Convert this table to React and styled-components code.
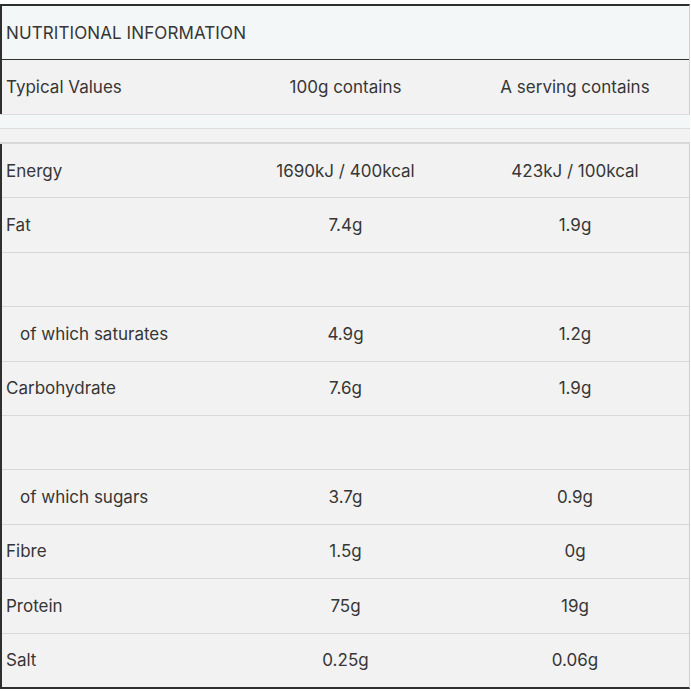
import styled, { createGlobalStyle } from 'styled-components';

const GlobalStyle = createGlobalStyle`
	html, body {
		margin: 0;
		padding: 0;
		background: #ffffff;
	}
	body {
		font-family: Inter, 'Noto Sans', 'Liberation Sans', sans-serif;
		color: #363636;
	}
`;

const ROWS = [
	{ name: 'Energy', per100: '1690kJ / 400kcal', serving: '423kJ / 100kcal' },
	{ name: 'Fat', per100: '7.4g', serving: '1.9g' },
	{ name: '', per100: '', serving: '' },
	{ name: 'of which saturates', per100: '4.9g', serving: '1.2g', sub: true },
	{ name: 'Carbohydrate', per100: '7.6g', serving: '1.9g' },
	{ name: '', per100: '', serving: '' },
	{ name: 'of which sugars', per100: '3.7g', serving: '0.9g', sub: true },
	{ name: 'Fibre', per100: '1.5g', serving: '0g' },
	{ name: 'Protein', per100: '75g', serving: '19g' },
	{ name: 'Salt', per100: '0.25g', serving: '0.06g' },
];

const Page = styled.div`
	width: 690px;
	padding-top: 4px;
`;

const HeadTable = styled.div`
	border-top: 2px solid #2f2f2f;
	border-left: 2px solid #2f2f2f;
	border-right: 1px solid #cfcfcf;
`;

const TitleRow = styled.div`
	height: 53px;
	display: flex;
	align-items: center;
	padding-left: 4px;
	background: #f3f7f8;
	border-bottom: 1px solid #2f2f2f;
	font-size: 17px;
	letter-spacing: 0.1px;
`;

const Row = styled.div`
	display: grid;
	grid-template-columns: 228px 231px 1fr;
	align-items: center;
	height: ${(p) => p.$height || '53.4px'};
	background: #f2f2f2;
	border-bottom: 1px solid #d8d8d8;
	font-size: 17px;

	&:last-child {
		border-bottom: none;
	}
`;

const Label = styled.div`
	padding-left: ${(p) => (p.$sub ? '18px' : '4px')};
`;

const Value = styled.div`
	text-align: center;
`;

const Gap = styled.div`
	height: 13px;
	background: #f3f7f8;
	border-top: 1px solid #dcdcdc;
	border-bottom: 1px solid #dcdcdc;
`;

const Band = styled.div`
	height: 13px;
	background: #f2f2f2;
	border-bottom: 2px solid #d8d8d8;
`;

const BodyTable = styled.div`
	border-left: 2px solid #2f2f2f;
	border-right: 1px solid #cfcfcf;
	border-bottom: 2px solid #2f2f2f;
`;

export default function App() {
	return (
		<Page>
			<GlobalStyle />
			<HeadTable>
				<TitleRow>NUTRITIONAL INFORMATION</TitleRow>
				<Row $height="54px">
					<Label>Typical Values</Label>
					<Value>100g contains</Value>
					<Value>A serving contains</Value>
				</Row>
			</HeadTable>
			<Gap />
			<Band />
			<BodyTable>
				{ROWS.map((r, i) => (
					<Row key={i}>
						<Label $sub={r.sub}>{r.name}</Label>
						<Value>{r.per100}</Value>
						<Value>{r.serving}</Value>
					</Row>
				))}
			</BodyTable>
		</Page>
	);
}
